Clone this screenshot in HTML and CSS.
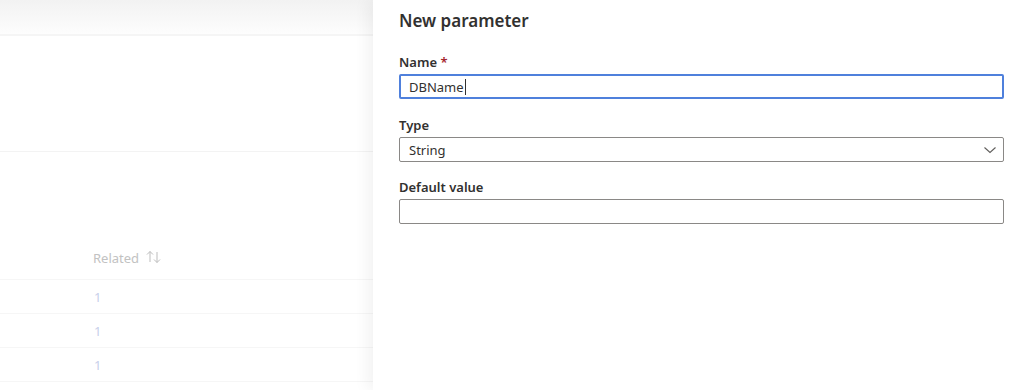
FILE: index.html
```html
<!doctype html>
<html lang="en">
  <head>
    <meta charset="UTF-8" />
    <meta name="viewport" content="width=device-width, initial-scale=1.0" />
    <title>New parameter</title>
    <link rel="stylesheet" href="styles.css">
  </head>
  <body>
    <div class="page">
      <div class="backdrop">
        <div class="topbar"></div>
        <div class="band"></div>
        <div class="table">
          <div class="row head">
            <span class="col">Related</span>
            <svg class="sort" width="16" height="14" viewBox="0 0 16 14">
              <path d="M4 12 V1.5 M1 4.5 L4 1.5 L7 4.5 M11 2 V12.5 M8 9.5 L11 12.5 L14 9.5" fill="none" stroke="#bdbdbd" stroke-width="1" />
            </svg>
          </div>
          <div class="row"><span class="col link">1</span></div>
          <div class="row"><span class="col link">1</span></div>
          <div class="row"><span class="col link">1</span></div>
        </div>
      </div>

      <div class="panel">
        <h1>New parameter</h1>

        <div class="field">
          <label for="name">Name <span class="req">*</span></label>
          <div class="box focused">
            <span class="value">DBName</span><span class="caret"></span>
          </div>
        </div>

        <div class="field">
          <label>Type</label>
          <div class="box select">
            <span class="value">String</span>
            <svg class="chevron" width="14" height="14" viewBox="0 0 14 14">
              <path d="M1.5 4.5 L7 9.5 L12.5 4.5" fill="none" stroke="#605e5c" stroke-width="1.1" />
            </svg>
          </div>
        </div>

        <div class="field">
          <label>Default value</label>
          <div class="box"></div>
        </div>
      </div>
    </div>
  </body>
</html>
```

FILE: styles.css
```css
html, body {
  margin: 0;
  height: 100%;
}

body {
  font-family: "Noto Sans", "Open Sans", sans-serif;
  color: #323130;
  background: #fff;
  overflow: hidden;
}

.page {
  display: flex;
  height: 390px;
}

/* dimmed page behind the side panel */
.backdrop {
  width: 373px;
  flex: none;
}

.topbar {
  height: 34px;
  background: linear-gradient(#f2f2f2, #fdfdfd);
  border-bottom: 2px solid #f5f5f5;
}

.band {
  height: 115px;
  border-bottom: 1px solid #f3f3f3;
}

.table {
  padding-top: 92px;
}

.row {
  height: 33px;
  border-bottom: 1px solid #f6f6f6;
  display: flex;
  align-items: center;
  font-size: 13px;
}

.row.head {
  height: 30px;
  padding-top: 5px;
  align-items: flex-start;
}

.row .col {
  margin-left: 93px;
  color: #c2c2c2;
}

.row .link {
  margin-left: 94px;
  color: #c7d0ea;
}

.sort {
  margin: 1px 0 0 7px;
}

.panel {
  flex: 1;
  padding: 0 20px 0 26px;
  box-shadow: -6px 0 14px rgba(0, 0, 0, 0.05);
}

.panel h1 {
  font-size: 17px;
  font-weight: 600;
  margin: 9px 0 20px;
  line-height: 24px;
}

.field {
  margin-bottom: 16px;
}

.field:first-of-type {
  margin-bottom: 17px;
}

.field label {
  display: block;
  font-size: 13px;
  font-weight: 600;
  line-height: 18px;
  margin-bottom: 3px;
}

.req {
  color: #a4262c;
}

.box {
  height: 23px;
  border: 1px solid #8a8886;
  border-radius: 2px;
  display: flex;
  align-items: center;
  padding: 0 9px;
  font-size: 13px;
  color: #323130;
}

.box.focused {
  border: 2px solid #4f80dc;
  height: 21px;
  padding: 0 8px;
}

.caret {
  width: 1px;
  height: 16px;
  background: #323130;
  margin-left: 1px;
}

.select {
  justify-content: space-between;
  padding-right: 6px;
}
```
